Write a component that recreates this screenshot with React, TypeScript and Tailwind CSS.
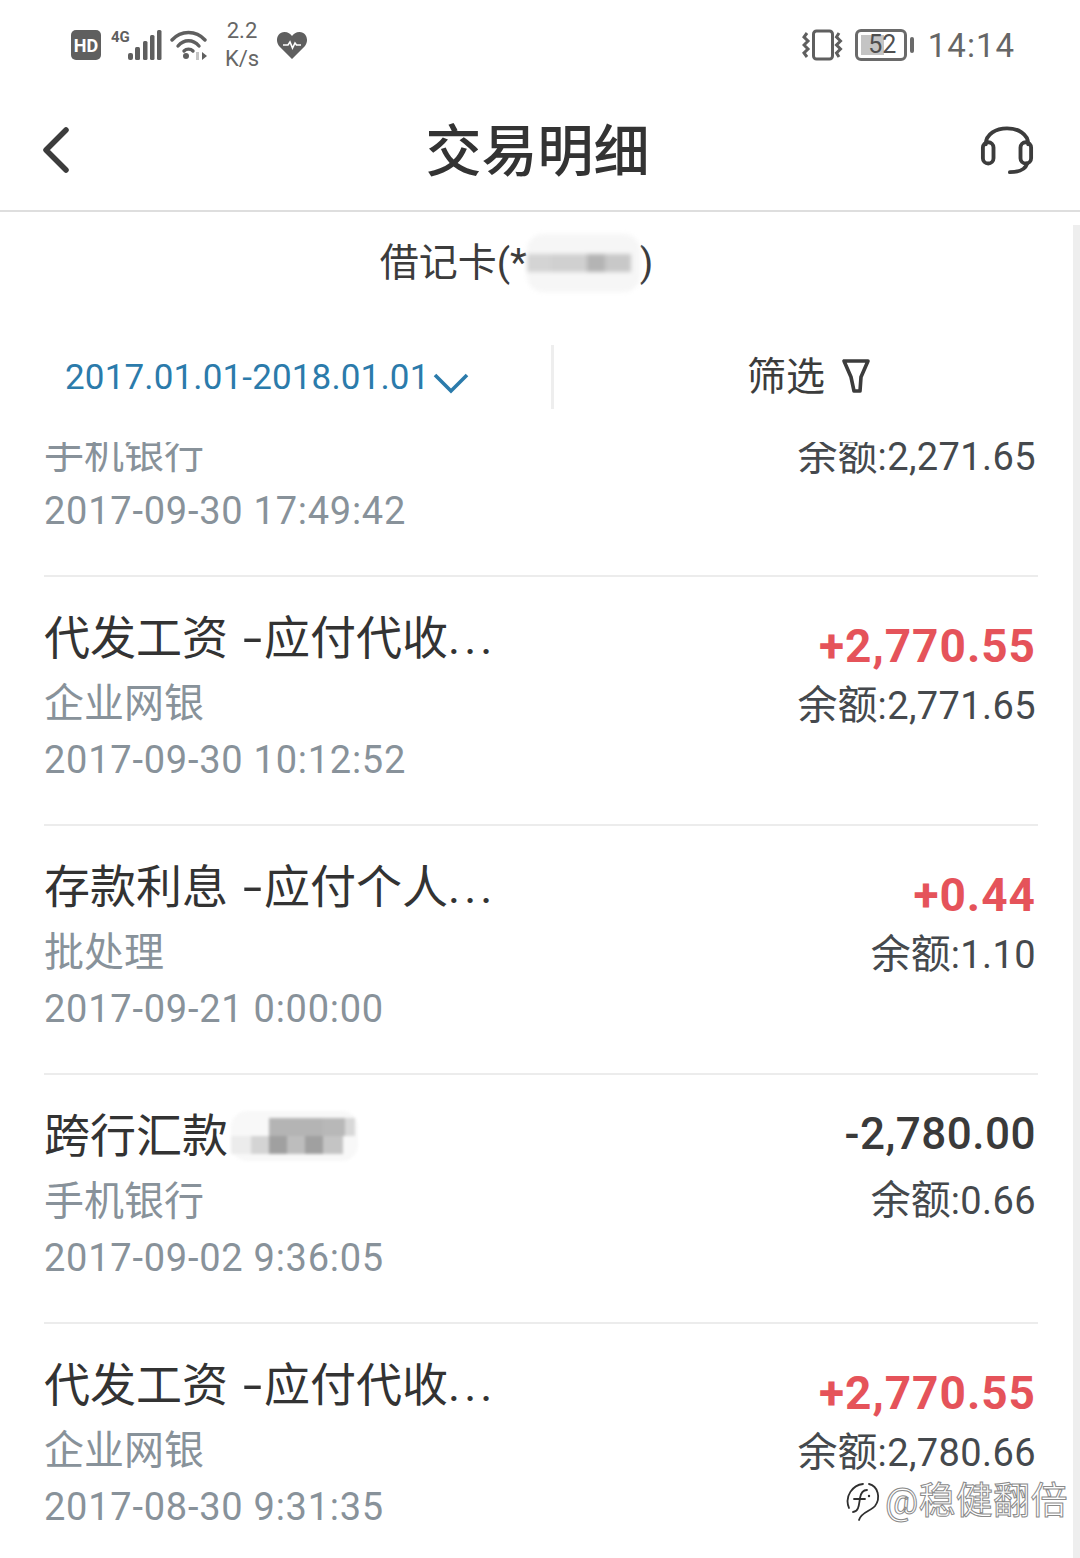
import React from "react";

const rows = [
  { title: "", tail: "", more: false, sub: "手机银行", date: "2017-09-30 17:49:42", amount: "", balance: ":2,271.65" },
  { title: "代发工资", tail: "应付代收", more: true, sub: "企业网银", date: "2017-09-30 10:12:52", amount: "+2,770.55", balance: ":2,771.65" },
  { title: "存款利息", tail: "应付个人", more: true, sub: "批处理", date: "2017-09-21 0:00:00", amount: "+0.44", balance: ":1.10" },
  { title: "跨行汇款", tail: "", more: false, sub: "手机银行", date: "2017-09-02 9:36:05", amount: "-2,780.00", balance: ":0.66", masked: true },
  { title: "代发工资", tail: "应付代收", more: true, sub: "企业网银", date: "2017-08-30 9:31:35", amount: "+2,770.55", balance: ":2,780.66" },
];

function CardMask() {
  return (
    <span className="inline-flex h-[58px] w-[113px] flex-col justify-center rounded-2xl bg-[#f6f6f6] blur-[2px]">
      <span className="flex h-[18px]">
        <span className="w-[24px] bg-[#d4d4d4]" />
        <span className="w-[36px] bg-[#d0d0d0]" />
        <span className="w-[18px] bg-[#b4b4b4]" />
        <span className="w-[26px] bg-[#c8c8c8]" />
      </span>
    </span>
  );
}

function NameMask() {
  return (
    <span className="ml-[3px] inline-flex h-[50px] w-[127px] flex-col justify-center rounded-2xl bg-[#f8f8f8] blur-[1.5px]">
      <span className="flex h-[18px]">
        <span className="w-[38px]" />
        <span className="w-[54px] bg-[#b4b4b4]" />
        <span className="w-[22px] bg-[#b8b8b8]" />
        <span className="w-[10px] bg-[#d8d8d8]" />
      </span>
      <span className="flex h-[18px]">
        <span className="w-[20px] bg-[#ececec]" />
        <span className="w-[18px] bg-[#d4d4d4]" />
        <span className="w-[18px] bg-[#a0a0a0]" />
        <span className="w-[18px] bg-[#bdbdbd]" />
        <span className="w-[18px] bg-[#a0a0a0]" />
        <span className="w-[20px] bg-[#c4c4c4]" />
      </span>
    </span>
  );
}

function StatusLeft() {
  return (
    <div className="flex items-center text-[#5c5c5c]">
      <span className="flex h-[30px] w-[30px] items-center justify-center rounded-[5px] bg-[#5f5f5f] text-[18px] font-bold text-white">HD</span>
      <svg width="52" height="34" viewBox="0 0 52 34" className="ml-[10px]" fill="#5f5f5f">
        <text x="0" y="14" fontSize="15" fontWeight="700" fontFamily="Roboto, sans-serif">4G</text>
        <rect x="17" y="25" width="5" height="7" rx="2" />
        <rect x="24" y="19" width="5" height="13" rx="1.5" />
        <rect x="32" y="13" width="4.500" height="19" rx="1.5" />
        <rect x="39" y="7" width="4.500" height="25" rx="1.5" />
        <rect x="46" y="2" width="4.500" height="30" rx="1.5" />
      </svg>
      <svg width="38" height="32" viewBox="0 0 38 32" className="ml-[7px]" fill="none" stroke="#5f5f5f" strokeWidth="3.4" strokeLinecap="round">
        <path d="M2 11C11 1 26 1 35 11" />
        <path d="M8 17C14 10 23 10 29 17" />
        <path d="M14 22C16.500 19.500 20.500 19.500 23 22" />
        <circle cx="16" cy="27" r="3" fill="#5f5f5f" stroke="none" />
        <path d="M32 23L37 27L32 31Z" fill="#5f5f5f" stroke="none" />
        <rect x="26" y="23" width="3" height="8" fill="#c4c4c4" stroke="none" />
      </svg>
      <div className="ml-[16px] flex w-[36px] flex-col items-center text-[22px] leading-[28px] text-[#666666]">
        <span>2.2</span>
        <span>K/s</span>
      </div>
      <svg width="32" height="30" viewBox="0 0 32 30" className="ml-[16px]">
        <path d="M16 29L3 16C-1 11 1 2 8.500 2C12 2 14.500 4 16 6C17.500 4 20 2 23.500 2C31 2 33 11 29 16Z" fill="#5f5f5f" />
        <path d="M7 15H12L14 12L16.500 18L19 13L20.500 15H25" fill="none" stroke="#ffffff" strokeWidth="1.600" />
      </svg>
    </div>
  );
}

function StatusRight() {
  return (
    <div className="flex items-center text-[#666666]">
      <svg width="42" height="32" viewBox="0 0 42 32" fill="none" stroke="#5f5f5f">
        <rect x="11.500" y="2" width="19" height="28" rx="3" strokeWidth="3" />
        <path d="M5 4L2 8L6 12L2 16L6 20L2 24L5 28" strokeWidth="3" />
        <path d="M37 4L34.500 8L38.500 12L34.500 16L38.500 20L34.500 24L37 28" strokeWidth="3" />
      </svg>
      <div className="ml-[11px] flex items-center">
        <div className="relative h-[32px] w-[52px] rounded-[6px] border-[3px] border-[#6a6a6a] p-[3px]">
          <div className="h-full w-[23px] bg-[#c4c4c4]" />
          <span className="absolute inset-x-0 top-0 pl-[3px] text-center text-[25px] leading-[26px] text-[#4f4f4f]">52</span>
        </div>
        <div className="ml-[3px] h-[16px] w-[4px] rounded-sm bg-[#6a6a6a]" />
      </div>
      <span className="ml-[14px] text-[33px] leading-none tracking-[1px] text-[#666666]">14:14</span>
    </div>
  );
}

function Row({ row }: { row: (typeof rows)[number] }) {
  return (
    <div className="flex h-[249px] shrink-0 justify-between border-b-2 border-[#ececec]">
      <div className="flex flex-col">
        <div className="mt-[33px] flex h-[56px] items-center text-[46px] leading-none text-[#333333]">
          <span>{row.title}</span>
          {row.tail && <span className="ml-[15px] mr-[2px] inline-block w-[19px] scale-x-150 text-center">-</span>}
          {row.tail && <span>{row.tail}</span>}
          {row.more && <span className="tracking-[4px]">...</span>}
          {row.masked && <NameMask />}
        </div>
        <div className="mt-[10px] h-[56px] text-[40px] leading-[56px] text-[#88929a]">{row.sub}</div>
        <div className="text-[38px] leading-[56px] tracking-[0.75px] text-[#88929a]">{row.date}</div>
      </div>
      <div className="flex flex-col items-end pr-[2px]">
        {row.amount.startsWith("-") ? (
          <div className="mt-[33px] h-[52px] text-[44px] font-medium leading-[52px] tracking-[0.5px] text-[#3a3a3a]">{row.amount}</div>
        ) : (
          <div className="mt-[43px] h-[52px] text-[46px] font-bold leading-[52px] tracking-[1px] text-[#e5535a]">{row.amount}</div>
        )}
        <div className={(row.masked ? "mt-[15px]" : "mt-[8px]") + " text-[38px] leading-[52px] tracking-[0.4px] text-[#45494d]"}>
          <span className="text-[40px] tracking-normal">余额</span>
          {row.balance}
        </div>
      </div>
    </div>
  );
}

export default function App() {
  return (
    <div className="relative flex h-[1558px] w-[1080px] flex-col overflow-hidden bg-white font-['Roboto','Noto_Sans_CJK_SC',sans-serif]">
      <div className="flex h-[90px] shrink-0 items-center justify-between pl-[71px] pr-[65px]">
        <StatusLeft />
        <StatusRight />
      </div>

      <div className="flex h-[122px] shrink-0 items-center justify-between border-b-2 border-[#dedede] pl-[43px] pr-[46px]">
        <div className="w-[100px]">
          <svg width="26" height="46" viewBox="0 0 26 46" fill="none" stroke="#3c3c3c" strokeWidth="5.500" strokeLinecap="round" strokeLinejoin="round">
            <path d="M23 3L3 23L23 43" />
          </svg>
        </div>
        <h1 className="mt-[4px] pr-[2px] text-[56px] font-medium text-[#333333]">交易明细</h1>
        <div className="flex w-[100px] justify-end">
          <svg width="54" height="52" viewBox="0 0 56 52" fill="none" stroke="#3c3c3c" strokeWidth="4" strokeLinecap="round">
            <path d="M6 20C6 -2 50 -2 50 20" />
            <rect x="3" y="18" width="11" height="22" rx="5.500" />
            <rect x="42" y="18" width="11" height="22" rx="5.500" />
            <path d="M49 40C47 46 40 49 31 49" />
          </svg>
        </div>
      </div>

      <div className="flex h-[100px] shrink-0 items-center justify-center pr-[47px] pt-[2px] text-[39px] text-[#3c3c3c]">
        <span>借记卡(*</span>
        <CardMask />
        <span>)</span>
      </div>

      <div className="flex h-[130px] shrink-0 items-center pb-[6px] pr-[6px] pt-[6px]">
        <div className="flex w-[551px] items-center pl-[65px]">
          <span className="mt-[3px] text-[35px] tracking-[0.15px] text-[#2b7bab]">2017.01.01-2018.01.01</span>
          <svg width="36" height="22" viewBox="0 0 36 22" fill="none" stroke="#2b7bab" strokeWidth="3.600" className="ml-[4px] mt-[12px]">
            <path d="M2 3L18 19L34 3" />
          </svg>
        </div>
        <div className="h-[64px] w-[3px] bg-[#eeeeee]" />
        <div className="flex flex-1 items-center justify-center pr-[10px] text-[39px] text-[#3c3c3c]">
          <span>筛选</span>
          <svg width="30" height="38" viewBox="0 0 30 38" fill="none" stroke="#3c3c3c" strokeWidth="3.600" strokeLinejoin="round" className="ml-[16px]">
            <path d="M3 3H27L20 19L19 33L13 33L10 19Z" />
          </svg>
        </div>
      </div>

      <div className="flex min-h-0 flex-1 flex-col overflow-hidden pl-[44px] pr-[42px]">
        <div className="mt-[-114px] flex flex-col">
          {rows.map((row, i) => (
            <Row key={i} row={row} />
          ))}
        </div>
      </div>

      <div className="absolute bottom-0 right-0 top-[225px] w-[7px] bg-[#eeeeee]" />

      <div className="absolute left-[845px] top-[1474px] flex items-center">
        <svg width="36" height="40" viewBox="0 0 36 40" fill="none" stroke="#2f2f2f" strokeWidth="1.800" strokeLinecap="round">
          <path d="M24 2C33 4 36 16 30 24C26 29 16 30 14 38" />
          <path d="M4 26C-1 14 8 3 18 2" />
          <path d="M8 30C14 30 14 22 15 16C16 10 18 8 22 8M9 17H20" />
          <circle cx="24" cy="14" r="1.200" fill="#2f2f2f" stroke="none" />
        </svg>
        <span className="ml-[4px] text-[37px] tracking-[0.3px] text-transparent [-webkit-text-stroke:1px_#8a8a8a]">@稳健翻倍</span>
      </div>
    </div>
  );
}
